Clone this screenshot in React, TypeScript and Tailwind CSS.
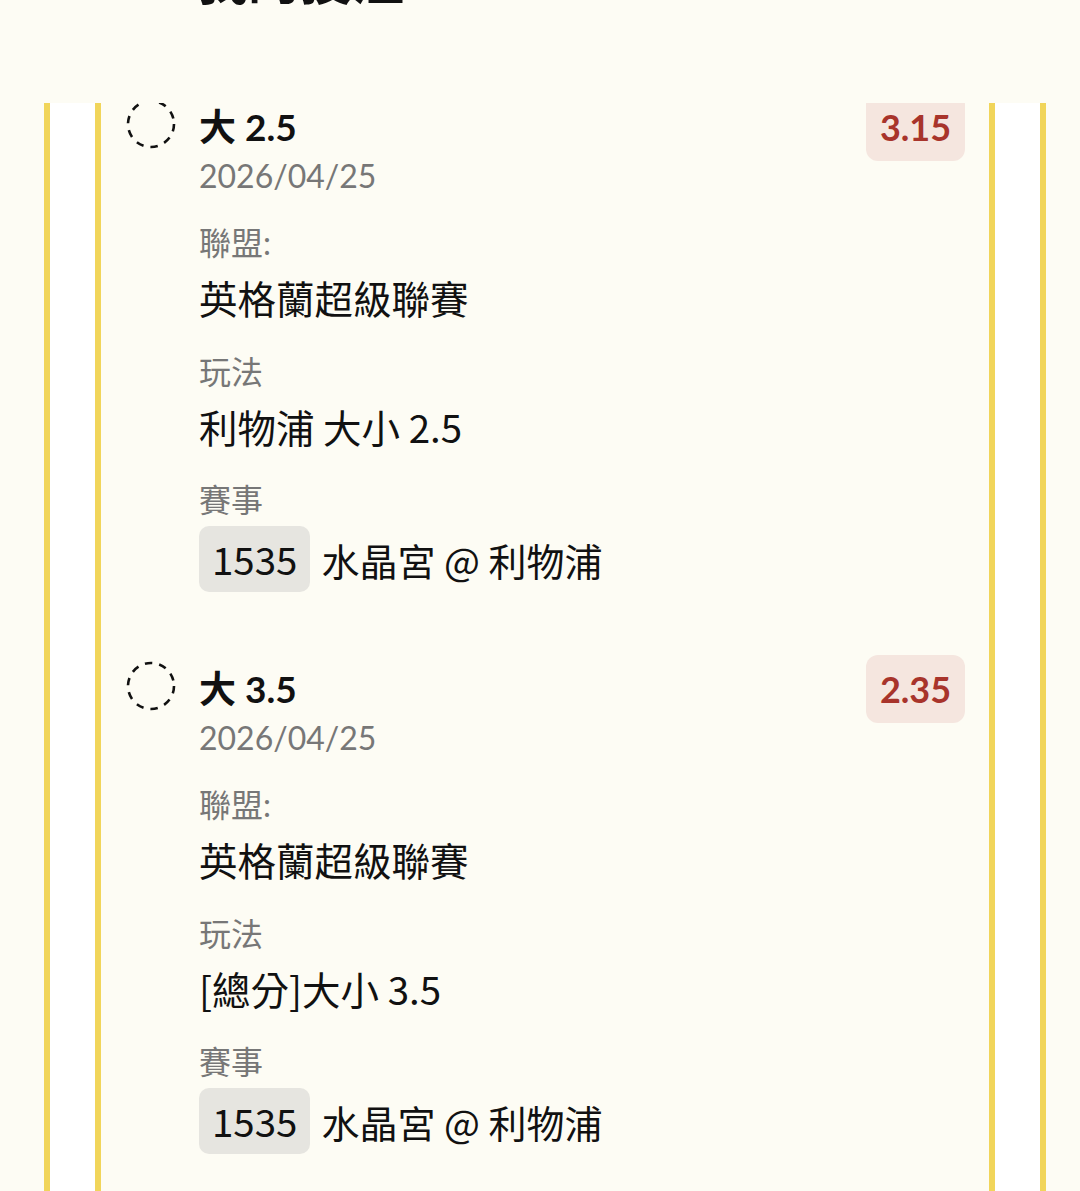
const bets = [
  { title: '大 2.5', odds: '3.15', date: '2026/04/25', league: '英格蘭超級聯賽', play: '利物浦 大小 2.5', code: '1535', match: '水晶宮 @ 利物浦' },
  { title: '大 3.5', odds: '2.35', date: '2026/04/25', league: '英格蘭超級聯賽', play: '[總分]大小 3.5', code: '1535', match: '水晶宮 @ 利物浦' },
]

const latin = { fontFamily: "Lato, 'Noto Sans CJK TC', sans-serif" }
const cjk = { fontFamily: "'Noto Sans CJK TC', 'Noto Sans', sans-serif" }

const DashedCircle = () => (
  <svg width="52" height="52" viewBox="0 0 52 52" className="shrink-0">
    <circle cx="26" cy="26" r="23" fill="none" stroke="#111" strokeWidth="2.6" strokeDasharray="7.5 7" />
  </svg>
)

const Field = ({ label, first, children }: { label: string; first?: boolean; children: React.ReactNode }) => (
  <div className={first ? 'mt-[28px]' : 'mt-[31px]'}>
    <p className="text-[32px] leading-[40px] text-[#777]" style={latin}>{label}</p>
    <div className="mt-[10px] text-[38.5px] leading-[48px] text-[#111]" style={cjk}>{children}</div>
  </div>
)

const BetItem = ({ bet }: { bet: typeof bets[number] }) => (
  <div className="flex items-start mb-[63px]">
    <div className="mt-[5px] mr-[22px]">
      <DashedCircle />
    </div>
    <div className="flex-1">
      <div className="flex items-start justify-between">
        <div>
          <p className="mt-[4px] text-[37px] leading-[60px] font-bold text-[#111]" style={latin}>{bet.title}</p>
          <p className="text-[32px] leading-[38px] text-[#777]" style={latin}>{bet.date}</p>
        </div>
        <div className="h-[68px] w-[99px] rounded-[12px] bg-[#f5e6df] flex items-center justify-center">
          <span className="text-[36px] font-bold text-[#a8342b]" style={latin}>{bet.odds}</span>
        </div>
      </div>
      <Field label="聯盟:" first>{bet.league}</Field>
      <Field label="玩法">{bet.play}</Field>
      <div className="mt-[30px]">
        <p className="text-[32px] leading-[40px] text-[#777]" style={latin}>賽事</p>
        <div className="mt-[6px] flex items-center">
          <span className="h-[66px] px-[13px] rounded-[10px] bg-[#e6e5e0] flex items-center text-[38.5px] text-[#111]" style={cjk}>{bet.code}</span>
          <span className="ml-[11px] text-[38px] text-[#111]" style={cjk}>{bet.match}</span>
        </div>
      </div>
    </div>
  </div>
)

export default function App() {
  return (
    <div className="h-[1191px] w-[1080px] overflow-hidden bg-[#fdfcf4] flex flex-col">
      <div className="h-[103px] shrink-0 overflow-hidden pl-[196px]">
        <h1 className="-mt-[52px] text-[52px] leading-[60px] font-bold text-[#111]" style={cjk}>我的投注</h1>
      </div>
      <div className="flex-1 min-h-0 ml-[44px] mr-[34px] border-x-[6px] border-[#f1d55a] bg-white px-[45px] overflow-hidden">
        <div className="h-full border-x-[6px] border-[#f1d55a] bg-[#fdfcf4] pl-[24px] pr-[24px] overflow-hidden">
          <div className="-mt-[10px]">
            {bets.map((b, i) => (
              <BetItem key={i} bet={b} />
            ))}
          </div>
        </div>
      </div>
    </div>
  )
}
